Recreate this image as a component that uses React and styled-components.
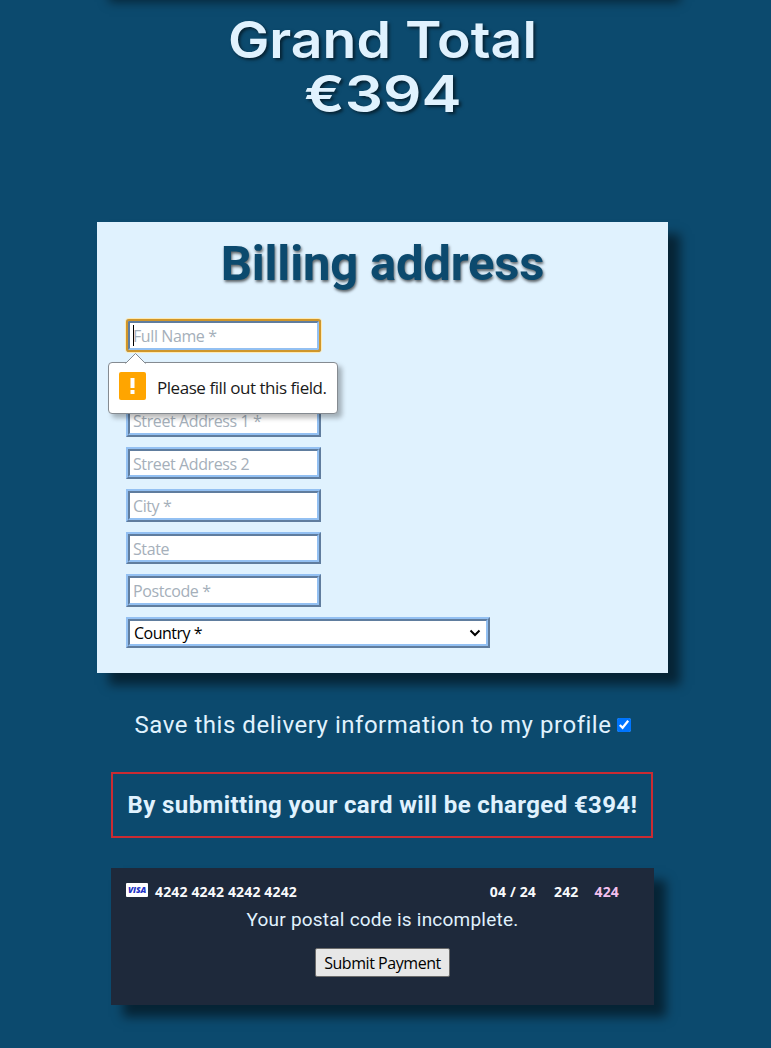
import React from "react";
import styled, { createGlobalStyle } from "styled-components";

const display = `Inter, "Liberation Sans", sans-serif`;
const heading = `Roboto, "Liberation Sans", sans-serif`;
const control = `"Open Sans", "Noto Sans", sans-serif`;
const castShadow = "12px 12px 10px rgba(0, 0, 0, 0.52)";

const GlobalStyle = createGlobalStyle`
  *, *::before, *::after { box-sizing: border-box; }
  html { background: #0c4a6e; }
  body { margin: 0; background: #0c4a6e; color: #e0f2fe; }
`;

const Page = styled.main`
  width: 765px;
  height: 1048px;
  overflow: hidden;
  display: flex;
  flex-direction: column;
  align-items: center;
`;

const SummaryCard = styled.section`
  flex: none;
  width: 571px;
  height: 40px;
  margin-top: -50px;
  background: #e0f2fe;
  box-shadow: ${castShadow};
`;

const Total = styled.h1`
  margin: 23px 0 0;
  display: flex;
  flex-direction: column;
  align-items: center;
  font: 600 51px/54px ${display};
  text-shadow: 2px 2px 3px rgba(0, 0, 0, 0.55);
`;

const TotalLine = styled.span`
  transform: scaleX(${(p) => p.$stretch});
`;

const BillingPanel = styled.section`
  flex: none;
  width: 571px;
  height: 451px;
  margin-top: 101px;
  padding: 12px 29px 0;
  background: #e0f2fe;
  box-shadow: ${castShadow};
`;

const BillingTitle = styled.h2`
  margin: 0 0 25px;
  text-align: center;
  white-space: nowrap;
  color: #0c4a6e;
  font: 700 49px/60px ${heading};
  letter-spacing: -0.2px;
  text-shadow: 1px 2px 3px rgba(0, 0, 0, 0.6);
`;

const Fields = styled.form`
  display: flex;
  flex-direction: column;
  align-items: flex-start;
  gap: 10px;
`;

const FieldSlot = styled.div`
  position: relative;
  height: 32.5px;
`;

const Field = styled.input`
  display: block;
  width: 195px;
  height: 32.5px;
  margin: 0;
  padding: 2px 3px 0;
  border: 4px ridge #93c0f2;
  border-radius: 0;
  background: #fff;
  font: 16px/22px ${control};
  letter-spacing: -0.4px;
  outline: ${(p) => (p.$active ? "2px solid #cf962b" : "none")};
  outline-offset: -2px;
  ${(p) => p.$active && "border-radius: 3px; box-shadow: 0 0 0 1px #ffe9b0;"}
  &::placeholder { color: #a5afba; opacity: 1; }
`;

const Caret = styled.span`
  position: absolute;
  left: 7px;
  top: 6px;
  width: 1px;
  height: 21px;
  background: #000;
`;

const Country = styled.div`
  width: 364px;
  height: 31.5px;
  display: flex;
  align-items: center;
  justify-content: space-between;
  padding: 2px 5px 0 4px;
  border: 4px ridge #93c0f2;
  background: #fff;
  color: #000;
  font: 16px/22px ${control};
  letter-spacing: -0.5px;
`;

const Bubble = styled.div`
  position: absolute;
  z-index: 2;
  left: -18px;
  top: 43px;
  width: 230px;
  height: 52px;
  display: flex;
  align-items: center;
  gap: 11px;
  padding: 0 10px;
  border: 1px solid #858b91;
  border-radius: 4px;
  background: #fff;
  box-shadow: 4px 4px 5px rgba(0, 0, 0, 0.28);
  color: #1a1a1a;
  font: 17px/24px ${control};
  letter-spacing: -0.45px;
  white-space: nowrap;
`;

const BubbleArrow = styled.svg`
  position: absolute;
  left: 16px;
  top: -10px;
`;

const Alert = styled.span`
  flex: none;
  width: 27px;
  height: 28px;
  margin-bottom: 4px;
  display: grid;
  place-items: center;
  border-radius: 2px;
  background: #ffa500;
`;

const SaveLabel = styled.label`
  margin-top: 34px;
  display: flex;
  align-items: center;
  font: 24px/36px ${heading};
  letter-spacing: 0.53px;
  white-space: nowrap;
`;

const SaveBox = styled.input`
  width: 14px;
  height: 14px;
  margin: 0 0 0 5px;
`;

const ChargeNotice = styled.p`
  width: 542px;
  height: 66px;
  margin: 29px 1px 0 0;
  border: 2px solid #cb2b32;
  text-align: center;
  font: 700 24px/62px ${heading};
  letter-spacing: 0.38px;
  text-indent: 1px;
  white-space: nowrap;
`;

const PaymentCard = styled.section`
  flex: none;
  width: 543px;
  height: 137px;
  margin-top: 30px;
  padding-top: 13px;
  display: flex;
  flex-direction: column;
  align-items: center;
  background: #1e293b;
  box-shadow: ${castShadow};
`;

const CardRow = styled.div`
  align-self: stretch;
  height: 21px;
  display: flex;
  align-items: center;
  padding: 0 35px 0 15px;
  color: #f8fafc;
  font: 700 14px/21px ${control};
  letter-spacing: 0.16px;
`;

const VisaMark = styled.span`
  width: 22px;
  height: 14px;
  margin: 0 7px 3px 0;
  border-radius: 1px;
  background: #fff;
  color: #2233c5;
  text-align: center;
  font: italic 800 8.5px/14px ${control};
  letter-spacing: -0.1px;
`;

const CardDetail = styled.span`
  margin-left: ${(p) => p.$gap || "0"};
  color: ${(p) => (p.$invalid ? "#f3c0ee" : "inherit")};
`;

const CardError = styled.p`
  margin: 4px 0 0;
  font: 19px/28px ${heading};
  letter-spacing: 0.22px;
`;

const Submit = styled.button`
  width: 135px;
  height: 29px;
  margin-top: 14px;
  padding: 1px 0 0;
  border: 1px solid #6b6b6b;
  border-radius: 2px;
  background: #e7e7e7;
  color: #000;
  font: 16px/22px ${control};
  letter-spacing: -0.45px;
`;

const remainingFields = ["Phone Number *", "Street Address 1 *", "Street Address 2", "City *", "State", "Postcode *"];

export default function App() {
  return (
    <>
      <GlobalStyle />
      <Page>
        <SummaryCard />
        <Total>
          <TotalLine $stretch={1.085}>Grand Total</TotalLine>
          <TotalLine $stretch={1.18}>€394</TotalLine>
        </Total>
        <BillingPanel>
          <BillingTitle>Billing address</BillingTitle>
          <Fields>
            <FieldSlot>
              <Field $active placeholder="Full Name *" />
              <Caret />
              <Bubble role="alert">
                <BubbleArrow width="21" height="11" viewBox="0 0 21 11">
                  <path d="M0.5 10.5 L10.5 0.5 L20.5 10.5" fill="#fff" stroke="#858b91" />
                  <path d="M1 11 H20" stroke="#fff" />
                </BubbleArrow>
                <Alert>
                  <svg width="5" height="16" viewBox="0 0 5 16" fill="#fff">
                    <rect x="0.5" y="0" width="4" height="10" />
                    <rect x="0.5" y="12" width="4" height="4" />
                  </svg>
                </Alert>
                Please fill out this field.
              </Bubble>
            </FieldSlot>
            {remainingFields.map((label) => (
              <Field key={label} placeholder={label} />
            ))}
            <Country>
              Country *
              <svg width="12" height="8" viewBox="0 0 12 8" fill="none">
                <path d="M1.5 1.5 L6 6 L10.5 1.5" stroke="#000" strokeWidth="2" />
              </svg>
            </Country>
          </Fields>
        </BillingPanel>
        <SaveLabel>
          Save this delivery information to my profile
          <SaveBox type="checkbox" defaultChecked />
        </SaveLabel>
        <ChargeNotice>By submitting your card will be charged €394!</ChargeNotice>
        <PaymentCard>
          <CardRow>
            <VisaMark>VISA</VisaMark>
            <CardDetail>4242 4242 4242 4242</CardDetail>
            <CardDetail $gap="auto">04 / 24</CardDetail>
            <CardDetail $gap="18px">242</CardDetail>
            <CardDetail $gap="16px" $invalid>424</CardDetail>
          </CardRow>
          <CardError>Your postal code is incomplete.</CardError>
          <Submit type="button">Submit Payment</Submit>
        </PaymentCard>
      </Page>
    </>
  );
}
